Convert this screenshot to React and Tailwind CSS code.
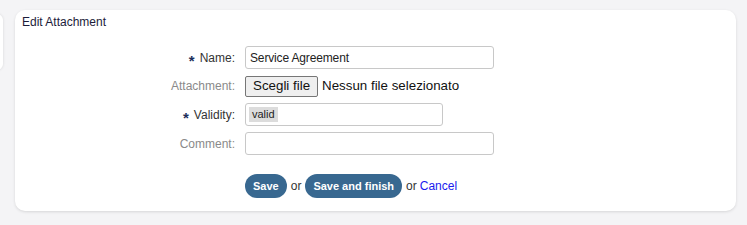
export default function App() {
  const font = { fontFamily: '"Liberation Sans", Arial, sans-serif' };
  return (
    <div className="w-[747px] h-[225px] bg-[#f4f4f6] relative overflow-hidden" style={font}>
      {/* sliver of the neighbouring panel on the left */}
      <div className="absolute left-[-20px] top-[14px] w-[23px] h-[56px] bg-white rounded-[6px] shadow-[0_0_3px_rgba(0,0,0,0.12)]" />

      <div className="absolute left-[15px] top-[10px] w-[721px] h-[201px] bg-white rounded-[10px] shadow-[0_1px_3px_rgba(0,0,0,0.12)]">
        <div className="pl-[7px] pt-[4px] text-[12px] leading-[16px] text-[#1c1c3a]">Edit Attachment</div>

        <div className="mt-[16px] grid grid-cols-[220px_1fr] gap-x-[10px] gap-y-[6px] text-[12px] items-center">
          <label className="flex justify-end items-center h-[22px] text-[#333]">
            <span className="text-[#1d2f5c] text-[15px] font-bold mr-[5px] mt-[5px] leading-none">*</span>Name:
          </label>
          <div className="w-[249px] h-[23px] border border-[#c8c8c8] rounded-[3px] px-[4px] flex items-center text-[#222] tracking-[-0.15px]">
            Service Agreement
          </div>

          <label className="flex justify-end items-center h-[22px] text-[#8a8a8a]">Attachment:</label>
          <div className="flex items-center h-[22px] text-[13.33px] text-[#111]">
            <span className="h-[21px] px-[7px] border border-[#767676] rounded-[2px] bg-[#efefef] flex items-center">Scegli file</span>
            <span className="ml-[4px]">Nessun file selezionato</span>
          </div>

          <label className="flex justify-end items-center h-[22px] text-[#333]">
            <span className="text-[#1d2f5c] text-[15px] font-bold mr-[5px] mt-[5px] leading-none">*</span>Validity:
          </label>
          <div className="w-[198px] h-[23px] border border-[#c8c8c8] rounded-[3px] px-[3px] flex items-center">
            <span className="bg-[#dcdcdc] text-[#222] text-[11px] px-[3px] h-[15px] flex items-center">valid</span>
          </div>

          <label className="flex justify-end items-center h-[22px] text-[#8a8a8a]">Comment:</label>
          <div className="w-[249px] h-[23px] border border-[#c8c8c8] rounded-[3px]" />

          <div />
          <div className="flex items-center mt-[13px] text-[12px] text-[#333]">
            <button className="h-[24px] px-[8px] rounded-full bg-[#386890] text-white font-bold text-[11px]">Save</button>
            <span className="mx-[4px]">or</span>
            <button className="h-[24px] px-[8px] rounded-full bg-[#386890] text-white font-bold text-[11px]">Save and finish</button>
            <span className="ml-[4px]">or</span>
            <a className="ml-[3px] text-[#1a1aee]">Cancel</a>
          </div>
        </div>
      </div>
    </div>
  );
}
